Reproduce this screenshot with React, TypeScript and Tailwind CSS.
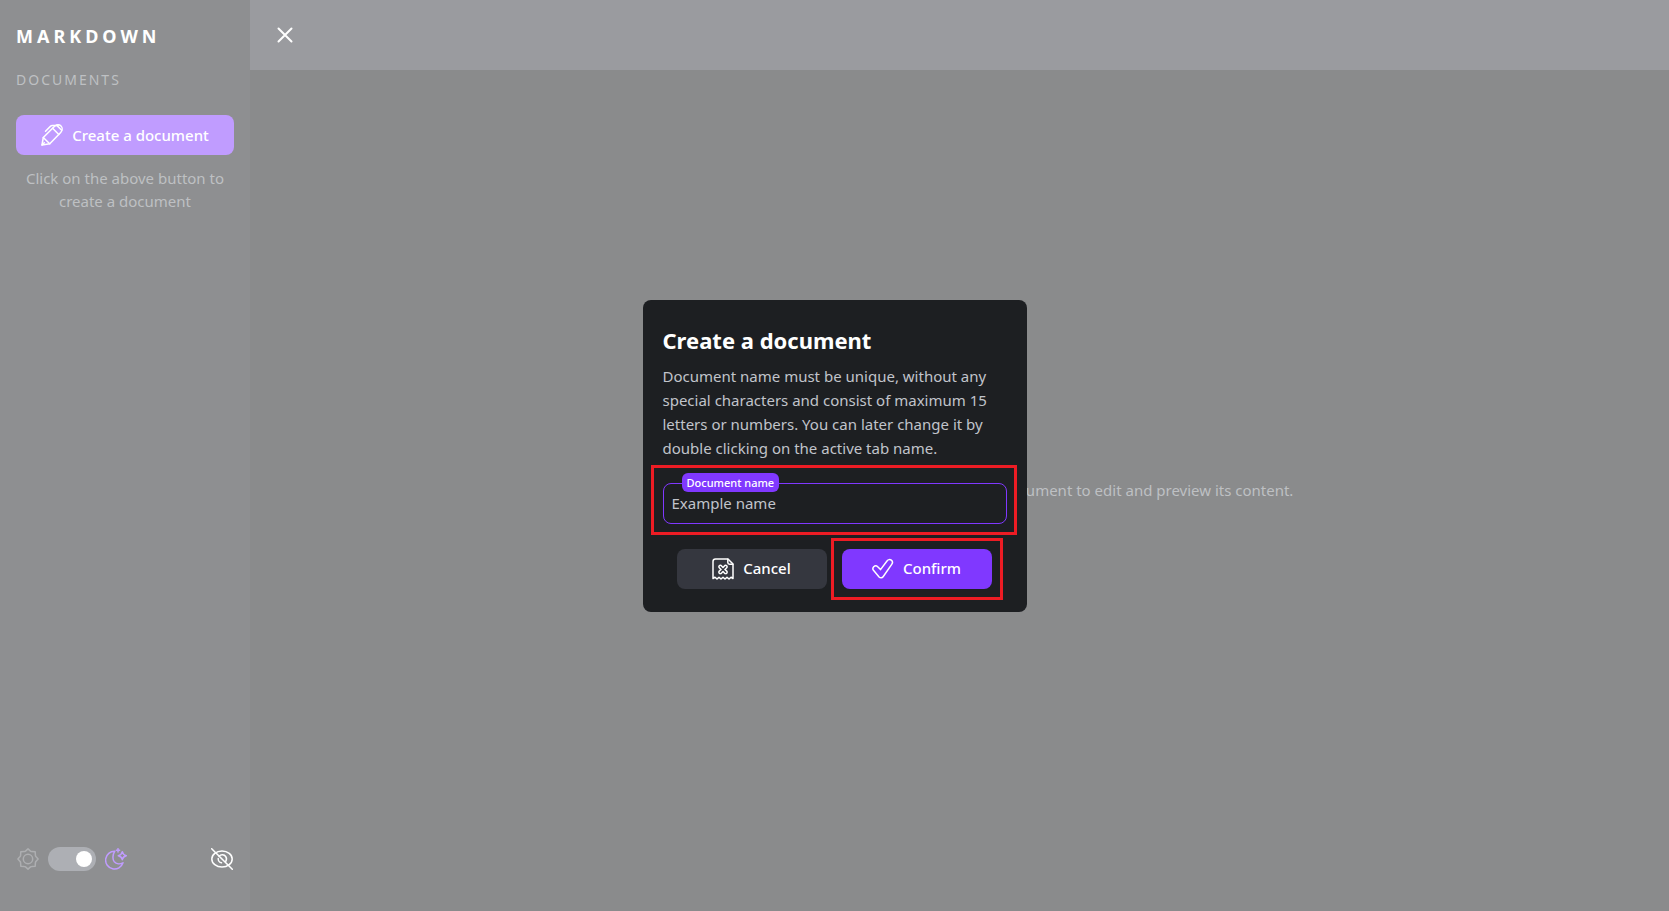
import React, { useState } from "react";

type IconProps = { className?: string; children: React.ReactNode };

function Icon({ className = "", children }: IconProps) {
  return (
    <svg
      viewBox="0 0 22 22"
      width="22"
      height="22"
      fill="none"
      stroke="currentColor"
      strokeWidth="1.5"
      strokeLinecap="round"
      strokeLinejoin="round"
      aria-hidden="true"
      className={`shrink-0 ${className}`}
    >
      {children}
    </svg>
  );
}

const PencilIcon = () => (
  <Icon>
    <path d="M1 21l1.300-7.500L13.600 2.300c2-1.900 4.800-1.900 6.400-.3s1.600 4.400-.3 6.400L8.800 19.700 1 21z" />
    <path d="M2.300 13.500l6.400 6.200M11.600 4.300l6.200 6.200M15.800 1.400l4.900 4.900M1 21l2.300-2.300" />
    <path d="M4.500 7.200l4.600-4.600c.7-.7 1.400-1 2.400-1H17" />
  </Icon>
);

const CancelIcon = () => (
  <Icon>
    <path d="M1 20.500V3.500C1 2 2 1 3.500 1H16l5 5v14.500l-2-1.300-2 1.800-2-1.800-2 1.800-2-1.800-2 1.800-2-1.800-2 1.800-2-1.800z" />
    <path d="M15.800 1.200V4.500c0 1 .7 1.700 1.700 1.700h3.300" />
    <path d="M11 9.500l1.400-1.600c.7-.8 1.700-.8 2.300-.2s.6 1.600-.2 2.300L12.900 11.500l1.600 1.400c.8.7.8 1.700.2 2.300s-1.600.6-2.300-.2L11 13.500l-1.400 1.500c-.7.8-1.700.8-2.300.2s-.6-1.600.2-2.300l1.600-1.400-1.600-1.500c-.8-.7-.8-1.700-.2-2.300s1.600-.6 2.300.2z" />
  </Icon>
);

const CheckIcon = () => (
  <Icon>
    <path d="M1.700 8.800c1.200-1.200 2.900-1.200 4-.1l2.800 2.900 6.500-8.600c1.200-1.600 3-1.800 4.300-.8s1.500 2.700.4 4.200l-8.600 12.300c-1 1.400-2.800 1.500-4 .2L1.700 12.600c-1-1.100-1-2.700 0-3.800z" />
  </Icon>
);

const SunIcon = () => (
  <Icon>
    <circle cx="11" cy="11" r="4.700" />
    <path d="M11 .9l2.500 2.200c.4.300.8.500 1.300.5l3.400.2.200 3.400c0 .5.200.9.500 1.300L21.100 11l-2.200 2.500c-.3.400-.5.800-.5 1.300l-.2 3.400-3.400.2c-.5 0-.9.200-1.300.5L11 21.100l-2.500-2.200c-.4-.3-.8-.5-1.300-.5l-3.400-.2-.2-3.400c0-.5-.2-.9-.5-1.300L.9 11l2.200-2.500c.3-.4.5-.8.5-1.300l.2-3.400 3.400-.2c.5 0 .9-.2 1.300-.5z" />
  </Icon>
);

const MoonIcon = () => (
  <Icon>
    <path d="M9.800 3.200A8.900 8.900 0 1 0 18 14.800c-3 1.600-6.700 1.300-8.700-1-2-2.500-1.700-7.200.5-10.600z" />
    <path d="M17.300 3.700c.5 2.500 1.500 3.500 4 4-2.500.5-3.500 1.500-4 4-.5-2.500-1.500-3.500-4-4 2.500-.5 3.500-1.500 4-4zM13 .7v3.200M11.400 2.300h3.200" />
  </Icon>
);

const EyeOffIcon = () => (
  <Icon>
    <ellipse cx="11" cy="11" rx="10.200" ry="8" />
    <path d="M8 8.200c2-2 5.200-1.800 6.700.3 1 1.500 1 3.400 0 5M7.200 10.500c-.1 2 1.300 4 3.300 4.300" />
    <path d="M.7.700l20.600 20.600" />
  </Icon>
);

export default function App() {
  const [name, setName] = useState("");
  const [dark, setDark] = useState(true);

  return (
    <div className="flex h-screen overflow-hidden bg-[#151619] font-['Noto_Sans',sans-serif] text-[15px] text-white">
      <aside className="flex w-[250px] shrink-0 flex-col bg-[#1d1f22] px-4 pt-6 pb-10">
        <h1 className="text-lg leading-6 font-bold tracking-[4px]">MARKDOWN</h1>
        <h2 className="mt-5 text-sm leading-6 tracking-[2px] text-[#7c8187]">DOCUMENTS</h2>
        <button
          type="button"
          className="mt-[23px] flex h-10 items-center justify-center gap-[9px] rounded-lg bg-[#8038ff] font-medium"
        >
          <PencilIcon />
          Create a document
        </button>
        <p className="mt-3 text-center leading-[23px] text-[#7c8187]">
          Click on the above button to create a document
        </p>
        <div className="mt-auto flex items-center gap-[9px] px-px">
          <span className="text-[#5a5d62]">
            <SunIcon />
          </span>
          <label className="relative flex h-6 w-12 cursor-pointer items-center rounded-full bg-[#5a5f69] p-1">
            <input
              type="checkbox"
              aria-label="Dark theme"
              checked={dark}
              onChange={(e) => setDark(e.target.checked)}
              className="peer sr-only"
            />
            <span className="size-4 rounded-full bg-white peer-checked:translate-x-6" />
          </label>
          <span className="text-[#8038ff]">
            <MoonIcon />
          </span>
          <button type="button" aria-label="Hide sidebar" className="ml-auto">
            <EyeOffIcon />
          </button>
        </div>
      </aside>

      <main className="flex w-screen shrink-0 flex-col">
        <header className="flex h-[70px] items-center bg-[#35373f] px-6">
          <button type="button" aria-label="Close menu">
            <Icon>
              <path strokeWidth="2" d="M4.500 4.500l13 13M17.500 4.500l-13 13" />
            </Icon>
          </button>
        </header>
        <div className="flex flex-1 items-center justify-center">
          <p className="text-[#7c8187]">Select or create a document to edit and preview its content.</p>
        </div>
      </main>

      <div className="fixed inset-0 flex items-center justify-center bg-white/50">
        <form
          role="dialog"
          aria-labelledby="dialog-title"
          onSubmit={(e) => e.preventDefault()}
          className="w-96 rounded-lg bg-[#1d1f22] pt-6 pb-3"
        >
          <div className="px-5">
            <h2 id="dialog-title" className="text-[22px] leading-8 font-bold">
              Create a document
            </h2>
            <p className="mt-2 leading-6 text-[#c1c4cb]">
              Document name must be unique, without any special characters and consist of maximum 15
              letters or numbers. You can later change it by double clicking on the active tab name.
            </p>
          </div>
          <div className="mt-[5px] mr-[10px] ml-2 border-3 border-[#ed1c24] pt-[15px] pr-[7px] pb-2 pl-[9px]">
            <div className="relative">
              <label
                htmlFor="document-name"
                className="absolute -top-[10px] left-[19px] rounded-md bg-[#8038ff] px-[5px] text-[11px] leading-[19px] font-medium"
              >
                Document name
              </label>
              <input
                id="document-name"
                value={name}
                onChange={(e) => setName(e.target.value)}
                placeholder="Example name"
                className="block h-[41px] w-full rounded-lg border border-[#8038ff] bg-transparent px-2 outline-none placeholder:text-[#c1c4cb]"
              />
            </div>
          </div>
          <div className="mt-[3px] flex items-center justify-center gap-1 pl-[10px]">
            <button
              type="button"
              className="flex h-10 w-[150px] items-center justify-center gap-[9px] rounded-lg bg-[#35373f] font-medium"
            >
              <CancelIcon />
              Cancel
            </button>
            <div className="border-3 border-[#ed1c24] p-2">
              <button
                type="submit"
                className="flex h-10 w-[150px] items-center justify-center gap-[9px] rounded-lg bg-[#8038ff] font-medium"
              >
                <CheckIcon />
                Confirm
              </button>
            </div>
          </div>
        </form>
      </div>
    </div>
  );
}
